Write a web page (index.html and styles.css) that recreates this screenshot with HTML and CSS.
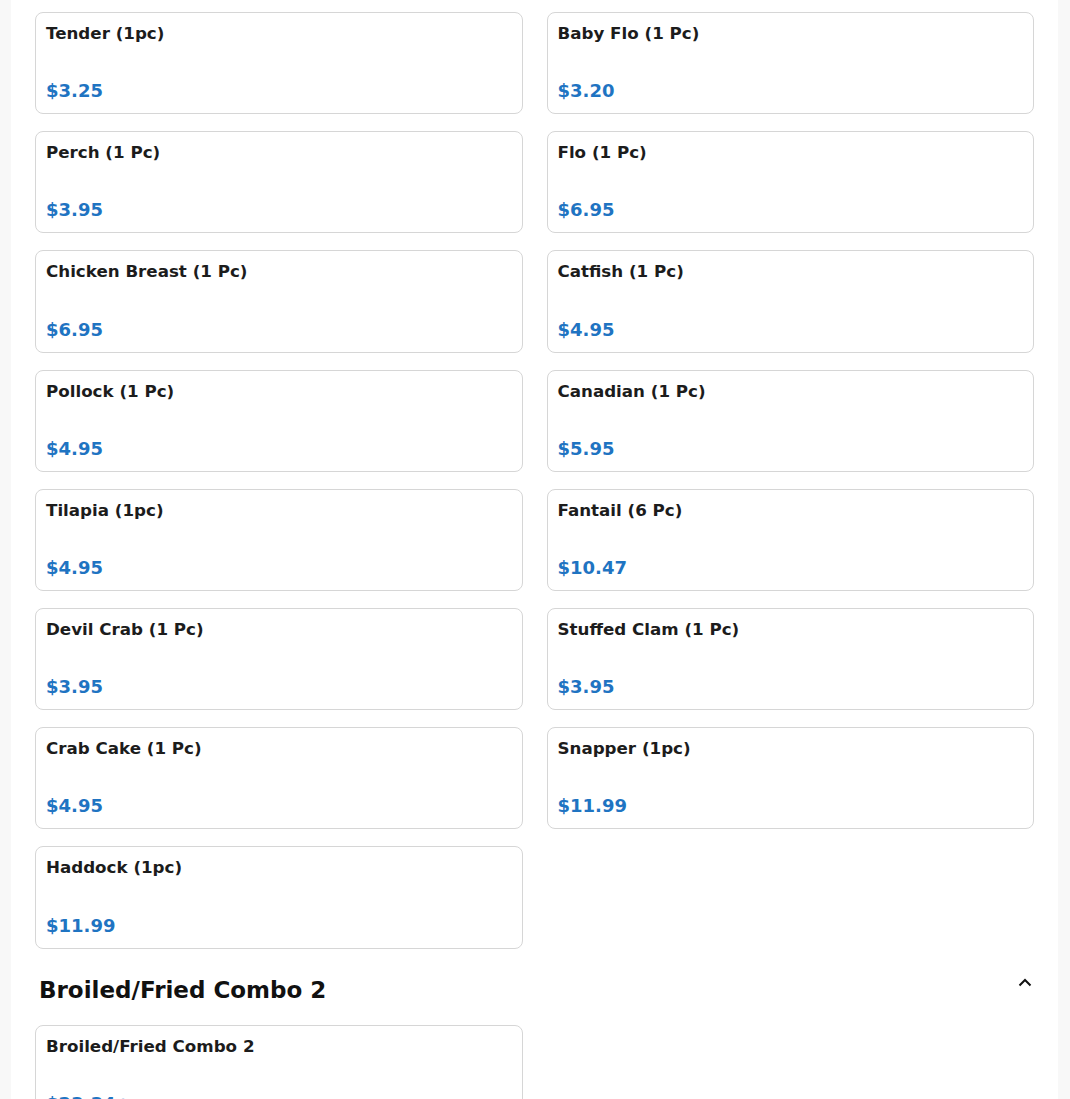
FILE: index.html
```html
<!doctype html>
<html>
    <head>
        <meta charset="utf-8" />
        <title>Menu</title>
        <link rel="stylesheet" href="styles.css">
    </head>
    <body>
        <div class="panel">
            <div class="item-grid">
                <div class="item-card"><div class="item-name">Tender (1pc)</div><div class="item-price">$3.25</div></div>
                <div class="item-card"><div class="item-name">Baby Flo (1 Pc)</div><div class="item-price">$3.20</div></div>
                <div class="item-card"><div class="item-name">Perch (1 Pc)</div><div class="item-price">$3.95</div></div>
                <div class="item-card"><div class="item-name">Flo (1 Pc)</div><div class="item-price">$6.95</div></div>
                <div class="item-card"><div class="item-name">Chicken Breast (1 Pc)</div><div class="item-price">$6.95</div></div>
                <div class="item-card"><div class="item-name">Catfish (1 Pc)</div><div class="item-price">$4.95</div></div>
                <div class="item-card"><div class="item-name">Pollock (1 Pc)</div><div class="item-price">$4.95</div></div>
                <div class="item-card"><div class="item-name">Canadian (1 Pc)</div><div class="item-price">$5.95</div></div>
                <div class="item-card"><div class="item-name">Tilapia (1pc)</div><div class="item-price">$4.95</div></div>
                <div class="item-card"><div class="item-name">Fantail (6 Pc)</div><div class="item-price">$10.47</div></div>
                <div class="item-card"><div class="item-name">Devil Crab (1 Pc)</div><div class="item-price">$3.95</div></div>
                <div class="item-card"><div class="item-name">Stuffed Clam (1 Pc)</div><div class="item-price">$3.95</div></div>
                <div class="item-card"><div class="item-name">Crab Cake (1 Pc)</div><div class="item-price">$4.95</div></div>
                <div class="item-card"><div class="item-name">Snapper (1pc)</div><div class="item-price">$11.99</div></div>
                <div class="item-card"><div class="item-name">Haddock (1pc)</div><div class="item-price">$11.99</div></div>
            </div>

            <div class="section-header">
                <h2>Broiled/Fried Combo 2</h2>
                <svg class="chevron" width="16" height="16" viewBox="0 0 16 16" fill="none" stroke="#111" stroke-width="2">
                    <path d="M2.5 10.5 L8 5 L13.5 10.5" />
                </svg>
            </div>

            <div class="item-grid">
                <div class="item-card"><div class="item-name">Broiled/Fried Combo 2</div><div class="item-price">$23.34+</div></div>
            </div>
        </div>
    </body>
</html>
```

FILE: styles.css
```css
body {
    font-family: "DejaVu Sans", Verdana, sans-serif;
    margin: 0;
    padding: 0;
    background-color: #f8f8f8;
}

.panel {
    width: 1047px;
    margin-left: 11px;
    padding: 12px 24px 0;
    box-sizing: border-box;
    background: white;
    min-height: 1099px;
}

.item-grid {
    display: grid;
    grid-template-columns: 1fr 1fr;
    column-gap: 24px;
    row-gap: 17px;
}

.item-card {
    height: 102.2px;
    box-sizing: border-box;
    border: 1px solid #d6d6d6;
    border-radius: 8px;
    padding: 8px 10px 9px;
    display: flex;
    flex-direction: column;
    justify-content: space-between;
}

.item-name {
    font-size: 16.7px;
    font-weight: bold;
    line-height: 24px;
    color: #1c1c1c;
}

.item-price {
    font-size: 18px;
    font-weight: bold;
    line-height: 27px;
    color: #1f74c2;
}

.section-header {
    display: flex;
    justify-content: space-between;
    align-items: flex-start;
    padding: 24px 1px 0 4px;
    margin-bottom: 18px;
}

.section-header h2 {
    margin: 0;
    font-size: 23px;
    line-height: 34px;
    color: #111;
}

.chevron {
    margin-top: 2px;
}
```
